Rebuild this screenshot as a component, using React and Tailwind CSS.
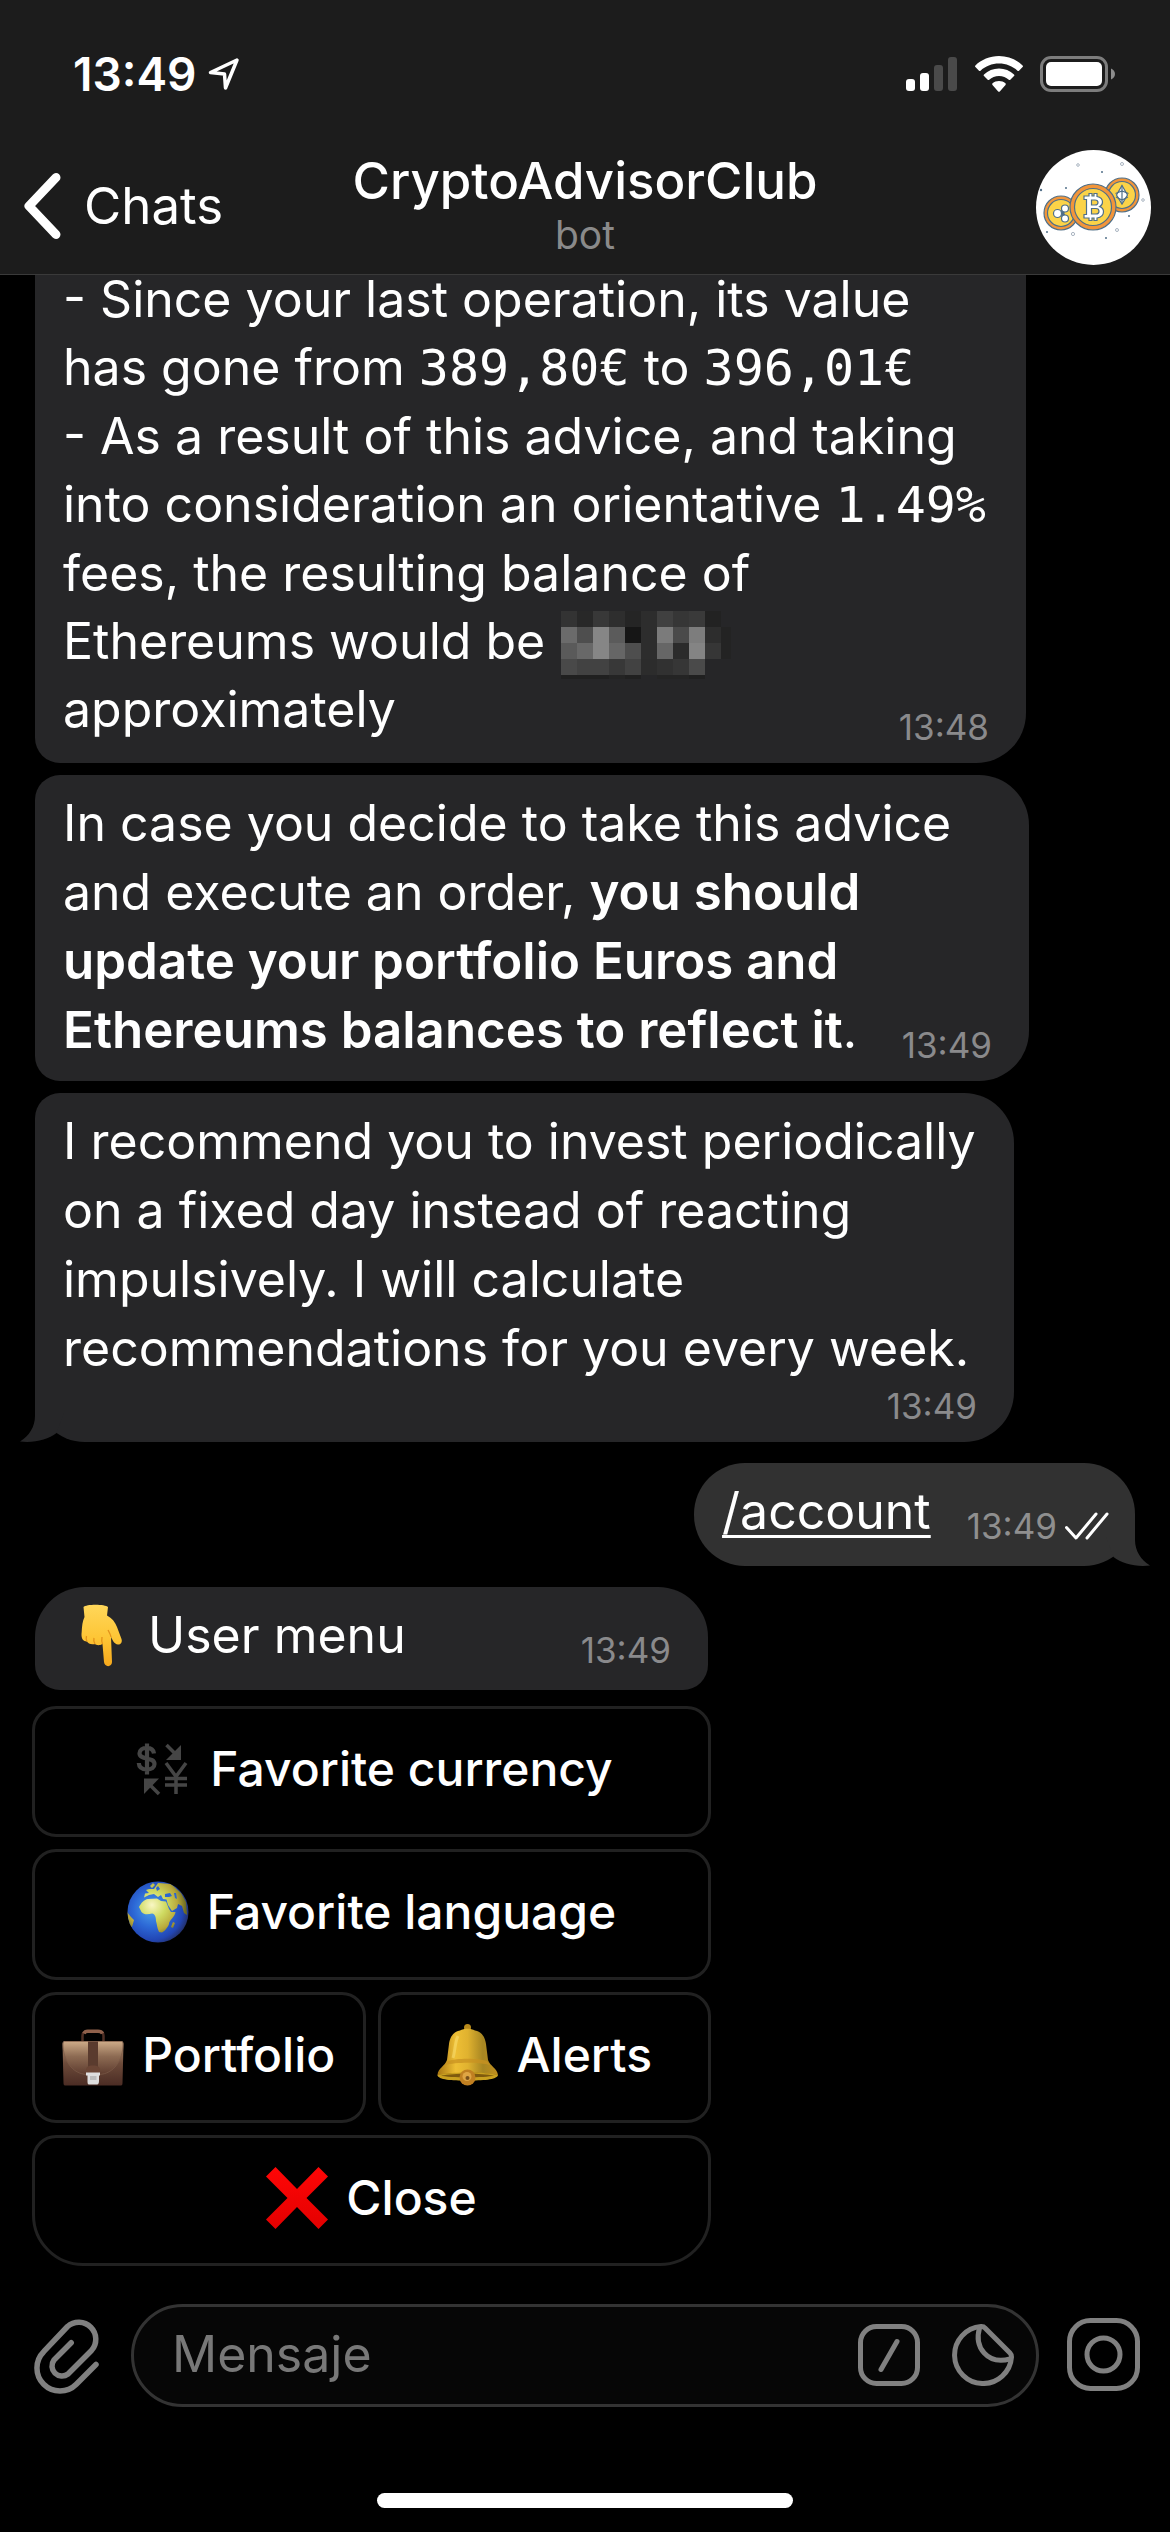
import React, { useState } from "react";
import clsx from "clsx";

function SignalIcon() {
  return (
    <svg width="52" height="34" viewBox="0 0 52 34" aria-hidden="true">
      <rect x="0" y="22" width="9" height="12" rx="3" fill="#fff" />
      <rect x="14" y="16" width="9" height="18" rx="3" fill="#fff" />
      <rect x="28" y="8" width="9" height="26" rx="3" fill="#4a4a4a" />
      <rect x="42" y="0" width="9" height="34" rx="3" fill="#4a4a4a" />
    </svg>
  );
}

function WifiIcon() {
  return (
    <svg width="48" height="36" viewBox="0 0 48 36" fill="#fff" aria-hidden="true">
      <path d="M24 0C14.800 0 6.400 3.600 .4 9.400c-.5.5-.5 1.200 0 1.700l3.600 3.700c.4.4 1 .4 1.500 0C10.400 10.200 16.900 7.600 24 7.600s13.600 2.600 18.500 7.200c.5.4 1.100.4 1.500 0l3.600-3.700c.5-.5.5-1.200 0-1.700C41.600 3.600 33.200 0 24 0z" />
      <path d="M24 12.600c-5.800 0-11 2.200-15 5.800-.5.5-.5 1.200 0 1.700l3.700 3.700c.4.4 1 .4 1.500 0 2.600-2.300 6-3.700 9.800-3.700s7.200 1.400 9.800 3.700c.5.4 1.100.4 1.500 0l3.700-3.700c.5-.5.5-1.200 0-1.700-4-3.600-9.200-5.800-15-5.800z" />
      <path d="M24 25c-2.500 0-4.700.9-6.400 2.300-.5.400-.5 1.100-.1 1.600l5.700 6.500c.4.500 1.200.5 1.600 0l5.700-6.500c.4-.5.4-1.200-.1-1.600C28.700 25.900 26.500 25 24 25z" />
    </svg>
  );
}

function BatteryIcon() {
  return (
    <svg width="75" height="36" viewBox="0 0 75 36" aria-hidden="true">
      <rect x="1.500" y="1.500" width="65" height="33" rx="9.500" fill="none" stroke="#7d7d7d" strokeWidth="3" />
      <rect x="6" y="6" width="56" height="24" rx="5" fill="#fff" />
      <path d="M71 12.500c2.500 1 4 3 4 5.500s-1.500 4.500-4 5.500z" fill="#8d8d8d" />
    </svg>
  );
}

function LocationIcon() {
  return (
    <svg width="32" height="34" viewBox="0 0 32 34" fill="none" stroke="#fff" strokeWidth="3.500" strokeLinejoin="round" aria-hidden="true">
      <path d="M29 3 2.500 15.500 16.500 17 17.500 31z" />
    </svg>
  );
}

function Coins() {
  return (
    <svg className="size-[115px] rounded-full bg-white" viewBox="0 0 115 115" role="img" aria-label="CryptoAdvisorClub">
      <g fill="none" stroke="#a9b4c0" strokeWidth="1">
        <circle cx="42" cy="15" r="1.300" />
        <circle cx="86" cy="14" r="1.500" />
        <circle cx="107" cy="50" r="1.300" />
        <circle cx="81" cy="80" r="1.500" />
        <circle cx="37" cy="84" r="1.600" />
      </g>
      <g fill="#52708a">
        <circle cx="66" cy="22" r="1" />
        <circle cx="30" cy="38" r="1" />
        <circle cx="5" cy="40" r="1.200" />
        <circle cx="93" cy="66" r="1" />
        <circle cx="70" cy="88" r="1" />
        <circle cx="11" cy="82" r="1" />
      </g>
      <g stroke="#4f6f88" strokeWidth="1.200">
        <circle cx="25" cy="63" r="17" fill="#f2953a" />
        <circle cx="25" cy="63" r="13.500" fill="#fbd348" />
        <path d="M26 63 20 63M26 63 29 58M26 63 29 69" strokeWidth="4" />
        <circle cx="21.500" cy="63.500" r="4" fill="#fff" />
        <circle cx="29" cy="58.500" r="3.500" fill="#fff" />
        <circle cx="29" cy="68.500" r="3.500" fill="#fff" />
        <circle cx="86" cy="45" r="17" fill="#f2953a" />
        <circle cx="86" cy="45" r="13.500" fill="#fbd348" />
        <path d="M86 35.500 91.500 45 86 54 80.500 45z" fill="#fff" />
        <path d="M86 35.500V54M79.500 43.500 86 41 92.500 43.500M80 47 86 50 92 47" fill="none" />
        <circle cx="57" cy="57" r="23" fill="#f2953a" />
        <circle cx="57" cy="57" r="18.500" fill="#fbd348" />
        <path
          d="M48 46h5v-2.500h3v2.500h2v-2.500h3v3c4 .8 5.500 3 5.500 5.500 0 2-1 3.700-2.700 4.600 2.300.8 3.700 2.700 3.700 5.200 0 3.500-2.500 5.700-6.500 6.200v2.500h-3V68h-2v2.500h-3V68h-5v-3.500h2.500v-15H48zM55.500 50v5h3.500c4 0 4-5 0-5zM55.500 58.500v5.500h4.500c4 0 4-5.500 0-5.500z"
          fill="#fff"
          fillRule="evenodd"
        />
      </g>
    </svg>
  );
}

// Redacted amount: one grey level per 16px cell, null leaves the bubble showing through
const censoredCells = [
  [0x33, 0x28, 0x38, 0x2e, 0x25, 0x2d, 0x40, 0x36, 0x3a, 0x22, null],
  [0x6b, 0x4e, 0x86, 0x5b, 0x16, 0x2d, 0x7b, 0x4a, 0x7d, 0x2d, 0x23],
  [0x5a, 0x68, 0x86, 0x66, 0x4e, 0x2d, 0x66, 0x2b, 0x84, 0x36, 0x23],
  [0x49, 0x42, 0x42, 0x38, 0x42, 0x2c, 0x31, 0x36, 0x4a, null, null],
  [0x20, 0x20, 0x20, 0x24, 0x20, null, 0x24, 0x24, 0x20, null, null],
];

function CensoredAmount() {
  return (
    <svg width="171" height="68" viewBox="0 0 171 68" className="-my-2 ml-[2px] inline-block align-middle" shapeRendering="crispEdges" role="img" aria-label="hidden amount">
      {censoredCells.map((row, y) =>
        row.map(
          (v, x) =>
            v !== null && (
              <rect
                key={`${x}-${y}`}
                x={x * 16}
                y={y * 16}
                width={x === 10 ? 10 : 16}
                height={y === 4 ? 4 : 16}
                fill={`rgb(${v},${v},${v})`}
              />
            )
        )
      )}
    </svg>
  );
}

function PointDownEmoji() {
  return (
    <svg width="62" height="63" viewBox="0 0 62 63" className="inline-block" aria-hidden="true">
      <defs>
        <linearGradient id="hand" x1="0" y1="0" x2="0" y2="1">
          <stop offset="0" stopColor="#ffd75a" />
          <stop offset=".55" stopColor="#fdc535" />
          <stop offset="1" stopColor="#f6a81c" />
        </linearGradient>
      </defs>
      <path
        d="M12.500 3C15 0 34 0 37 3L36 11.500C41 14 44 18 46 23L50.500 35C51.500 38 50 41 47 40.500C43 40 41.500 36 40 33L41 58C41 63.500 33.500 63.500 33 58L31.500 40C28 42 25 41 24 40C20 41 17 39.500 16 37.500C11 37 10 33 10.700 28C11 22 11.500 17 13.500 13Z"
        fill="url(#hand)"
      />
      <path d="M16 37.500C15 36 15 34 15.500 32M24 40C22.500 38 22.500 36 23 34M31.500 40C30.500 38 30.500 36 31 33M40 33C39.500 30 38 28 37 26" fill="none" stroke="#e2921a" strokeWidth="1.300" />
    </svg>
  );
}

function CurrencyEmoji() {
  return (
    <svg width="62" height="62" viewBox="0 0 62 62" className="text-[#454545]" fill="none" stroke="currentColor" strokeWidth="4.200" aria-hidden="true">
      <path d="M24 15.500C23.500 11.500 20.500 9.800 16.800 9.800C12.500 9.800 9.500 12 9.500 15.300C9.500 22.500 24.500 18.500 24.500 26C24.500 29.500 21.500 31.500 17 31.500C12.500 31.500 9 29.500 8.800 25M17 5.500V36.500" />
      <path d="M36.500 7 46.500 17" strokeWidth="3.500" />
      <path d="M51 7V22H36z" fill="currentColor" stroke="none" />
      <path d="M36 25 46 38.500 56 25M46 38V56M35 40.500H57M35 47H57" strokeWidth="3.500" />
      <path d="M14 40.500H29L14 56z" fill="currentColor" stroke="none" />
      <path d="M19 46 29 56" strokeWidth="3.500" />
    </svg>
  );
}

function GlobeEmoji() {
  return (
    <svg width="62" height="62" viewBox="0 0 62 62" aria-hidden="true">
      <defs>
        <radialGradient id="sea" cx=".4" cy=".45" r=".6">
          <stop offset="0" stopColor="#4da3ea" />
          <stop offset=".5" stopColor="#2c68d6" />
          <stop offset=".85" stopColor="#2246b4" />
          <stop offset="1" stopColor="#233374" />
        </radialGradient>
        <radialGradient id="land" gradientUnits="userSpaceOnUse" cx="25" cy="24" r="34">
          <stop offset="0" stopColor="#f9f7c4" />
          <stop offset=".4" stopColor="#cfdb62" />
          <stop offset=".75" stopColor="#b9a93c" />
          <stop offset="1" stopColor="#6c6a22" />
        </radialGradient>
        <clipPath id="globe">
          <circle cx="31" cy="31" r="30.500" />
        </clipPath>
      </defs>
      <circle cx="31" cy="31" r="30.500" fill="url(#sea)" />
      <g clipPath="url(#globe)" fill="url(#land)">
        <path d="M12 26C14 22 17 18.500 21 18L30 17.500L34 20L39 20.500L42 28L44 31L48.500 31C48 36 42 39 42 43C41 46 38 50 35 51.500L32 51C30 47 30 43 29 40C29 36 28 33 25 32.500C21 33.500 17 34 14.500 31Z" />
        <path d="M17 16.500L18 12.500L22 12L19 9L22 8L27 8L31 2L44 3L54 12L59 21L60 34L57 32L55 25L51 23L50 27L45 30L41 24L39.500 18.500L36 18L34 14L31 16L27 13L22 14Z" />
        <path d="M0 31L4 36L7 39L5 46L0 44Z" />
        <path d="M46 41L44 46L46 47L48 42Z" />
        <path d="M23 5L26 2L28 4L25 7Z" />
      </g>
      <g fill="#2b66cf">
        <path d="M38 13L43 12L45 15L42 16L38 16Z" />
        <path d="M47 12L49 12L50 18L48 17Z" />
        <path d="M29 7L31 5L33 8L30 10Z" />
      </g>
    </svg>
  );
}

function BriefcaseEmoji() {
  return (
    <svg width="62" height="62" viewBox="0 0 62 62" aria-hidden="true">
      <defs>
        <linearGradient id="leather" x1="0" y1="0" x2="0" y2="1">
          <stop offset="0" stopColor="#bb9878" />
          <stop offset=".5" stopColor="#6d4b3a" />
          <stop offset="1" stopColor="#4b2c24" />
        </linearGradient>
        <linearGradient id="flap" x1="0" y1="0" x2="0" y2="1">
          <stop offset="0" stopColor="#cdab88" />
          <stop offset=".45" stopColor="#8d6b53" />
          <stop offset="1" stopColor="#5e3c2f" />
        </linearGradient>
      </defs>
      <path d="M20.500 17V12C20.500 8.500 22.500 7.500 25 7.500H37C40 7.500 41.500 8.500 41.500 12V17" fill="none" stroke="#4f2f25" strokeWidth="2.500" />
      <path d="M22 9.500C23 7 25 7.200 26 7.200H36C38 7.200 39.500 7.500 40.500 9.500" fill="none" stroke="#8f604b" strokeWidth="3.500" />
      <path d="M3 17H59C60.500 17 61.500 18 61.500 20L60.500 59C60.500 61 60 61.500 58 61.500H4C2 61.500 1.500 61 1.500 59L.5 20C.5 18 1.500 17 3 17Z" fill="url(#leather)" />
      <path d="M1 20C1 18 2 17.500 3 17.500H59C60.500 17.500 61 18 61 20C61 36 52 50 37 50.500H25C10 50 1 36 1 20Z" fill="url(#flap)" stroke="#7b5a48" strokeWidth=".7" />
      <path d="M26 17.500H36V43H26Z" fill="#5a3b2e" />
      <path d="M24 50V46C24 43 26 41.500 31 41.500S38 43 38 46V50Z" fill="#6a4535" />
      <path d="M24 48.500H38V51.500H37V57C37 60 36 60.500 34 60.500H28C26 60.500 25.500 60 25.500 57V51.500H24Z" fill="#dedede" />
      <path d="M28 52H34.500V56H28Z" fill="#bcbcbc" />
    </svg>
  );
}

function BellEmoji() {
  return (
    <svg width="62" height="62" viewBox="0 0 62 62" aria-hidden="true">
      <defs>
        <linearGradient id="brass" x1="0" y1="0" x2="1" y2="0">
          <stop offset="0" stopColor="#a87612" />
          <stop offset=".3" stopColor="#eebf35" />
          <stop offset=".5" stopColor="#e0b22f" />
          <stop offset=".75" stopColor="#a78622" />
          <stop offset="1" stopColor="#c08e1e" />
        </linearGradient>
      </defs>
      <circle cx="30.500" cy="3.500" r="3.500" fill="#b88a1c" />
      <ellipse cx="30.500" cy="51" rx="30" ry="5.500" fill="#8b5f0d" />
      <path d="M23 6.500C27 4 34 4 38 6.500C45 8 48 13 49 20L51 36C53 42 60 44 61 51C50 48 12 48 .5 51C1 44 8 42 10 36L12 20C13 13 16 8 23 6.500Z" fill="url(#brass)" />
      <path d="M11 37C20 34 41 34 50 37L53 41C42 38 19 38 8 41Z" fill="#c89121" opacity=".75" />
      <path d="M21 12C18 18 18 27 16 34" stroke="#fbe37a" strokeWidth="3" fill="none" opacity=".5" />
      <path d="M.5 51C12 47.500 50 47.500 61 51C60 56 45 56.500 30 56.500S1 56 .5 51Z" fill="#c9a01f" />
      <path d="M4 51.500C18 49 44 49 57 51.500C48 54 12 54 4 51.500Z" fill="#7f5a0e" />
      <circle cx="30.500" cy="53.500" r="8" fill="#c07f21" />
      <circle cx="30" cy="52.500" r="4.500" fill="#dfa544" />
      <circle cx="30.500" cy="54" r="2" fill="#78501a" />
    </svg>
  );
}

function CrossEmoji() {
  return (
    <svg width="62" height="62" viewBox="0 0 62 62" aria-hidden="true">
      <defs>
        <linearGradient id="cross" x1="0" y1="0" x2="0" y2="1">
          <stop offset="0" stopColor="#ff0606" />
          <stop offset="1" stopColor="#e30000" />
        </linearGradient>
      </defs>
      <path d="M9.500 0 31 22 52.500 0 62 9.500 40.500 31 62 52.500 52.500 62 31 40 9.500 62 0 52.500 21.500 31 0 9.500Z" fill="url(#cross)" />
    </svg>
  );
}

function Tail({ side }) {
  return (
    <svg
      width="46"
      height="52"
      viewBox="0 0 46 52"
      className={clsx(
        "absolute bottom-0",
        side === "left" ? "-left-[15px] text-[#262628]" : "-right-[15px] -scale-x-100 text-[#313131]"
      )}
      fill="currentColor"
      aria-hidden="true"
    >
      <path d="M15 0V26C15 37 9 46 0 51.500C14 53 28 50 36.500 43L45 20V0Z" />
    </svg>
  );
}

function Mono({ children }) {
  return <code className="font-['DejaVu_Sans_Mono',monospace] text-[50px]">{children}</code>;
}

function Bold({ children }) {
  return <strong className="text-[51px] font-semibold leading-none">{children}</strong>;
}

function Bubble({ time, className, textClassName, tail, children }) {
  return (
    <article className={clsx("relative grid w-full shrink-0 bg-[#262628] pl-[28px] pr-[30px] pt-[14px]", className)}>
      {tail && <Tail side="left" />}
      <p className={clsx("relative col-start-1 row-start-1 whitespace-nowrap", textClassName)}>{children}</p>
      <time className="relative col-start-1 row-start-1 mr-[7px] self-end justify-self-end text-[35px] leading-[40px] text-[#8a8a8c]">
        {time}
      </time>
    </article>
  );
}

function KeyboardButton({ icon, label, className }) {
  return (
    <button
      type="button"
      className={clsx(
        "flex h-[131px] items-center justify-center gap-[18px] border-[3px] border-[#212121] pb-[5px] text-[48px] font-medium leading-[60px]",
        className || "rounded-[24px]"
      )}
    >
      {icon}
      {label}
    </button>
  );
}

export default function App() {
  const [message, setMessage] = useState("");

  return (
    <div className="flex h-screen flex-col overflow-hidden bg-black font-['Inter','Liberation_Sans',sans-serif] text-[50px] leading-[69px] text-white">
      <header className="shrink-0 border-b border-[#3a3a3a] bg-[#1c1c1c] pb-[9px]">
        <div className="flex h-[150px] items-center justify-between pb-[2px] pl-[73px] pr-[55px]">
          <div className="flex items-center gap-[12px]">
            <time className="text-[46px] font-semibold leading-[56px]">13:49</time>
            <LocationIcon />
          </div>
          <div className="flex items-center gap-[17px]">
            <SignalIcon />
            <WifiIcon />
            <BatteryIcon />
          </div>
        </div>
        <div className="grid grid-cols-[1fr_auto_1fr] items-center px-[19px]">
          <button type="button" className="flex items-center gap-[22px] justify-self-start pb-[3px] pl-[4px] text-[51px] leading-[60px]">
            <svg width="39" height="68" viewBox="0 0 39 68" fill="none" stroke="currentColor" strokeWidth="9" strokeLinecap="round" strokeLinejoin="round" aria-hidden="true">
              <path d="M33 5.500 6 34 33 62.500" />
            </svg>
            Chats
          </button>
          <div className="pb-1 text-center">
            <h1 className="text-[51px] font-medium leading-[58px]">CryptoAdvisorClub</h1>
            <p className="text-[39px] leading-[50px] text-[#8a8a8a]">bot</p>
          </div>
          <div className="justify-self-end">
            <Coins />
          </div>
        </div>
      </header>

      <main className="flex min-h-0 flex-1 flex-col justify-end overflow-hidden pb-[38px] pl-[35px] pr-[35px]">
        <Bubble time="13:48" className="max-w-[991px] rounded-bl-[25px] rounded-br-[50px] pb-[16px]" textClassName="pb-1 leading-[68px]">
          - Since your last operation, its value
          <br />
          has gone from <Mono>389,80€</Mono> to <Mono>396,01€</Mono>
          <br />
          - As a result of this advice, and taking
          <br />
          into consideration an orientative <Mono>1.49%</Mono>
          <br />
          fees, the resulting balance of
          <br />
          Ethereums would be <CensoredAmount />
          <br />
          approximately
        </Bubble>

        <Bubble time="13:49" className="mt-3 max-w-[994px] rounded-l-[25px] rounded-r-[50px] pb-[16px]">
          In case you decide to take this advice
          <br />
          and execute an order, <Bold>you should</Bold>
          <br />
          <Bold>update your portfolio Euros and</Bold>
          <br />
          <Bold>Ethereums balances to reflect it</Bold>.
        </Bubble>

        <Bubble
          time="13:49"
          className="mt-3 max-w-[979px] rounded-[50px] rounded-tl-[25px] pb-[16px]"
          textClassName="pb-[43px]"
          tail
        >
          I recommend you to invest periodically
          <br />
          on a fixed day instead of reacting
          <br />
          impulsively. I will calculate
          <br />
          recommendations for you every week.
        </Bubble>

        <article className="relative mt-[21px] flex shrink-0 items-end gap-[36px] self-end rounded-[51px] bg-[#313131] pb-[20px] pl-[28px] pr-[26px] pt-[14px]">
          <Tail side="right" />
          <a href="#account" className="relative underline decoration-[3px] underline-offset-[6px]">
            /account
          </a>
          <div className="relative flex items-end gap-[8px]">
            <time className="text-[35px] leading-[40px] text-[#8f8f8f]">13:49</time>
            <svg width="44" height="28" viewBox="0 0 44 28" className="mb-[6px]" fill="none" stroke="currentColor" strokeWidth="3" strokeLinecap="round" strokeLinejoin="round" aria-label="read" role="img">
              <path d="M1.500 15.500 11 26 31 2M22 26 42 2" />
            </svg>
          </div>
        </article>

        <Bubble time="13:49" className="mt-[21px] max-w-[673px] rounded-t-[50px] rounded-b-[25px] pb-[20px]" textClassName="flex items-center gap-[15px] pl-[8px]">
          <PointDownEmoji />
          User menu
        </Bubble>

        <div className="-ml-[3px] mt-4 grid w-full max-w-[679px] shrink-0 grid-cols-2 gap-[12px]">
          <KeyboardButton icon={<CurrencyEmoji />} label="Favorite currency" className="col-span-2 rounded-[24px]" />
          <KeyboardButton icon={<GlobeEmoji />} label="Favorite language" className="col-span-2 rounded-[24px]" />
          <KeyboardButton icon={<BriefcaseEmoji />} label="Portfolio" />
          <KeyboardButton icon={<BellEmoji />} label="Alerts" />
          <KeyboardButton icon={<CrossEmoji />} label="Close" className="col-span-2 rounded-t-[24px] rounded-b-[51px]" />
        </div>
      </main>

      <footer className="shrink-0 pb-[24px] text-[#808080]">
        <form className="flex items-center pl-[34px] pr-[30px]" onSubmit={(e) => e.preventDefault()}>
          <button type="button" aria-label="Attach" className="shrink-0 pb-[2px]">
            <svg width="69" height="79" viewBox="0 0 69 79" fill="none" stroke="currentColor" strokeWidth="5.500" strokeLinecap="round" strokeLinejoin="round">
              <path d="M62 49.500 42.300 69.300A23 23 0 0 1 9.700 36.700L33.500 11.500A17 17 0 0 1 57.500 35.500L34 59A10 10 0 0 1 20 45L37.200 27.700" />
            </svg>
          </button>
          <div className="ml-[28px] mr-[28px] flex h-[103px] min-w-0 flex-1 items-center gap-[32px] rounded-full border-[3px] border-[#333] bg-[#060606] pb-[2px] pl-[38px] pr-[22px]">
            <input
              type="text"
              aria-label="Mensaje"
              placeholder="Mensaje"
              value={message}
              onChange={(e) => setMessage(e.target.value)}
              className="min-w-0 flex-1 bg-transparent leading-[69px] text-white outline-none placeholder:text-[#787878]"
            />
            <button type="button" aria-label="Commands" className="shrink-0">
              <svg width="62" height="62" viewBox="0 0 62 62" fill="none" stroke="currentColor" strokeWidth="5" strokeLinecap="round">
                <rect x="2.500" y="2.500" width="57" height="57" rx="16" />
                <path d="M39 17.500 23 45.500" />
              </svg>
            </button>
            <button type="button" aria-label="Stickers" className="shrink-0">
              <svg width="62" height="62" viewBox="0 0 62 62" fill="none" stroke="currentColor" strokeWidth="5" strokeLinecap="round" strokeLinejoin="round">
                <path d="M29 2.600A28.500 28.500 0 1 0 59.500 33C59.500 31 59.300 30.300 58 29L33 4C32 2.800 31 2.500 29 2.600Z" />
                <path d="M27.500 4C22 23 35 41 58 35" />
              </svg>
            </button>
          </div>
          <button type="button" aria-label="Camera" className="shrink-0 pb-[2px]">
            <svg width="73" height="73" viewBox="0 0 73 73" fill="none" stroke="currentColor" strokeWidth="5">
              <rect x="2.500" y="2.500" width="68" height="68" rx="21" />
              <circle cx="36.500" cy="36.500" r="16.500" />
            </svg>
          </button>
        </form>
        <div className="mx-auto mt-[86px] h-[15px] w-[416px] rounded-full bg-white" />
      </footer>
    </div>
  );
}
